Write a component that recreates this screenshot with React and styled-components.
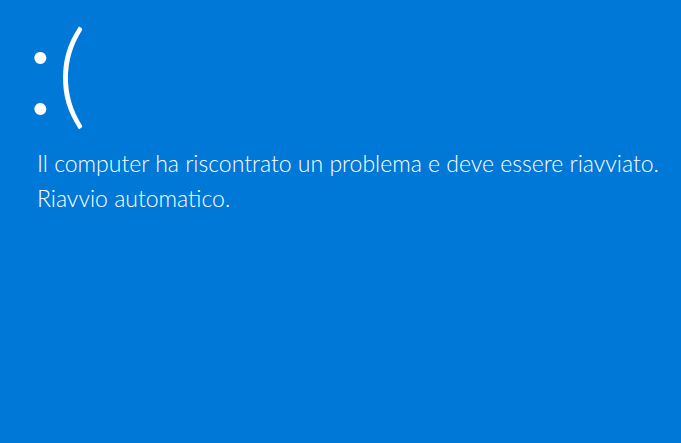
import React from "react";
import styled, { createGlobalStyle } from "styled-components";

const GlobalStyle = createGlobalStyle`
    html, body {
        margin: 0;
        padding: 0;
        background: #0078d7;
    }
`;

const Screen = styled.div`
    width: 681px;
    height: 443px;
    background: #0078d7;
    color: #ffffff;
    font-family: "Lato", "Open Sans", sans-serif;
    font-weight: 300;
    padding: 0 0 0 37px;
    box-sizing: border-box;
    overflow: hidden;
`;

const Face = styled.div`
    display: flex;
    align-items: flex-start;
    height: 146px;
    margin-left: -12px;
`;

const Glyph = styled.span`
    display: block;
    font-size: ${(p) => p.$size}px;
    line-height: 0.85;
    margin-top: ${(p) => p.$top}px;
    margin-left: ${(p) => p.$left || 0}px;
`;

const Message = styled.p`
    margin: 0;
    font-size: 23px;
    line-height: 35px;
`;

export default function App() {
    return (
        <>
            <GlobalStyle />
            <Screen>
                <Face>
                    <Glyph $size={128} $top={11}>:</Glyph>
                    <Glyph $size={115} $top={21} $left={1}>(</Glyph>
                </Face>
                <Message>Il computer ha riscontrato un problema e deve essere riavviato.</Message>
                <Message>Riavvio automatico.</Message>
            </Screen>
        </>
    );
}
